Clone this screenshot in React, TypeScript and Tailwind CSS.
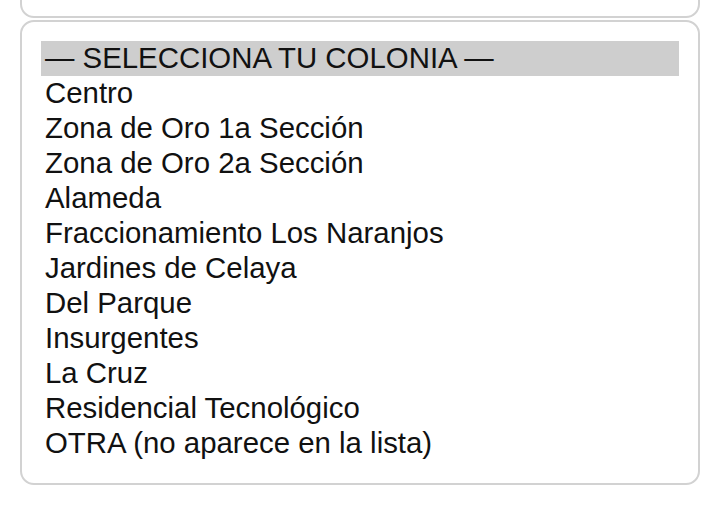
import React from "react";

const options = [
  "— SELECCIONA TU COLONIA —",
  "Centro",
  "Zona de Oro 1a Sección",
  "Zona de Oro 2a Sección",
  "Alameda",
  "Fraccionamiento Los Naranjos",
  "Jardines de Celaya",
  "Del Parque",
  "Insurgentes",
  "La Cruz",
  "Residencial Tecnológico",
  "OTRA (no aparece en la lista)",
];

export default function App() {
  return (
    <div
      className="w-[720px] h-[505px] bg-white overflow-hidden px-[20px]"
      style={{ fontFamily: '"Liberation Sans", Arial, sans-serif' }}
    >
      <div className="mt-[-30px] h-[48px] rounded-[14px] border-2 border-[#d2d2d2] bg-white" />
      <div className="mt-[2px] h-[465px] rounded-[14px] border-2 border-[#d2d2d2] bg-white pt-[19px] px-[19px]">
        <div className="flex flex-col">
          {options.map((o, i) => (
            <div
              key={o}
              className={`h-[35px] leading-[33px] pl-[4px] text-[29.4px] text-[#111] whitespace-nowrap ${
                i === 0 ? "bg-[#cecece]" : ""
              }`}
            >
              {o}
            </div>
          ))}
        </div>
      </div>
    </div>
  );
}
